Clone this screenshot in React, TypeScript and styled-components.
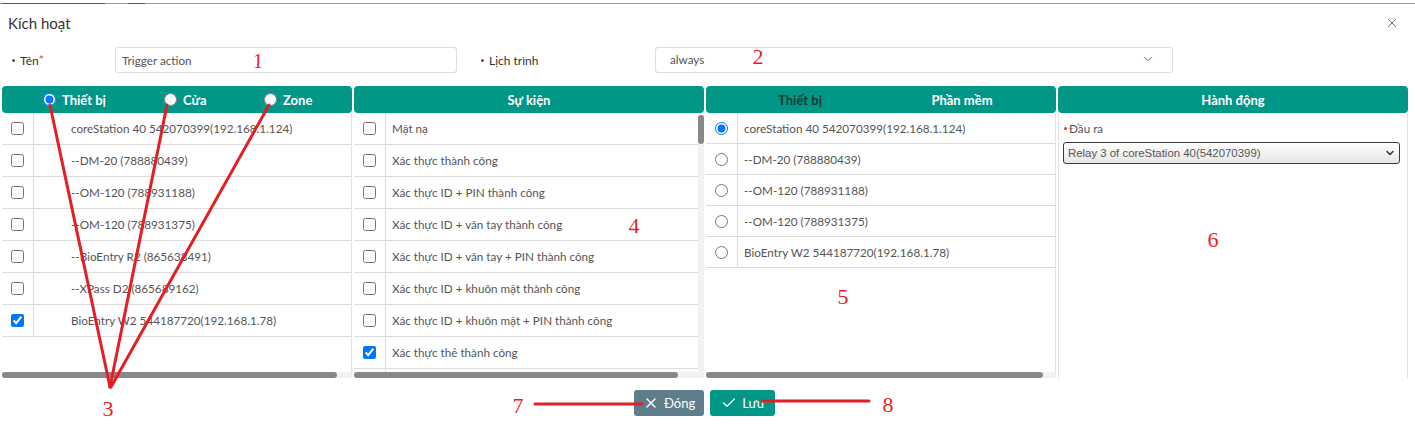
import React from "react";
import styled, { createGlobalStyle } from "styled-components";
import { X, ChevronDown, Check } from "lucide-react";

const GlobalStyle = createGlobalStyle`
  html, body { margin: 0; padding: 0; background: #fff; }
  body { font-family: Lato, "Noto Sans", sans-serif; }
  * { box-sizing: border-box; }
`;

const TEAL = "#009688";

const Page = styled.div`
  position: relative;
  width: 1415px;
  height: 442px;
  overflow: hidden;
  background: #fff;
  font-family: Lato, "Noto Sans", sans-serif;
`;

const TopStrip = styled.div`
  display: flex;
  height: 4px;
  padding-top: 3px;
`;

const StripSeg = styled.div<{ $w?: number; $c: string }>`
  height: 1px;
  background: ${(p) => p.$c};
  ${(p) => (p.$w ? `width: ${p.$w}px; flex: none;` : `flex: 1;`)}
`;

const TitleBar = styled.div`
  height: 38px;
  display: flex;
  align-items: center;
  justify-content: space-between;
  padding: 0 16px 0 8px;
`;

const Title = styled.h4`
  margin: 0;
  font-size: 15px;
  font-weight: 400;
  color: #333;
`;

const CloseBtn = styled.span`
  display: flex;
  color: #666;
`;

const FormRow = styled.div`
  display: grid;
  grid-template-columns: 103px 342px 198px 518px;
  align-items: center;
  height: 26px;
  margin: 5px 0 0 12px;
`;

const Label = styled.label<{ $indent?: number }>`
  font-size: 12px;
  color: #333;
  padding-left: ${(p) => p.$indent ?? 0}px;
  white-space: nowrap;
  display: flex;
  align-items: center;
`;

const Bullet = styled.span<{ $red?: boolean; $gap?: number }>`
  display: inline-block;
  width: 3px;
  height: 3px;
  border-radius: 50%;
  background: ${(p) => (p.$red ? "#e53935" : "#555")};
  margin-right: ${(p) => p.$gap ?? 5}px;
  flex: none;
`;

const Req = styled.span`
  color: #e53935;
  align-self: flex-start;
  margin-top: -1px;
`;

const TextBox = styled.input`
  height: 26px;
  width: 100%;
  border: 1px solid #dcdcdc;
  border-radius: 3px;
  padding: 0 6px;
  font-family: Lato, "Noto Sans", sans-serif;
  font-size: 11.7px;
  color: #555;
  outline: none;
`;

const SelectBox = styled.div`
  height: 26px;
  border: 1px solid #dcdcdc;
  border-radius: 3px;
  display: flex;
  align-items: center;
  justify-content: space-between;
  padding: 0 17px 2px 14px;
  font-size: 11.7px;
  color: #555;
`;

const Board = styled.div`
  display: grid;
  grid-template-columns: repeat(4, 350px);
  column-gap: 2px;
  margin: 13px 0 0 2px;
  height: 292px;
`;

const Panel = styled.div`
  display: flex;
  flex-direction: column;
  min-height: 0;
`;

const PanelHead = styled.div<{ $align?: string; $padLeft?: number }>`
  flex: none;
  height: 27px;
  background: ${TEAL};
  border-radius: 4px;
  color: #fff;
  font-weight: 700;
  font-size: 13px;
  display: flex;
  align-items: center;
  justify-content: ${(p) => p.$align ?? "center"};
  padding-left: ${(p) => p.$padLeft ?? 0}px;
`;

const RadioOption = styled.label<{ $w: number }>`
  display: flex;
  align-items: center;
  gap: 6px;
  width: ${(p) => p.$w}px;
  flex: none;
`;

const Tab = styled.div<{ $active?: boolean }>`
  width: 162px;
  text-align: center;
  color: ${(p) => (p.$active ? "#1f3a30" : "#fff")};
`;

const Radio = styled.input.attrs({ type: "radio" })`
  margin: 0;
  width: 13px;
  height: 13px;
`;

const CheckBox = styled.input.attrs({ type: "checkbox" })`
  margin: 0;
  width: 13px;
  height: 13px;
`;

const Body = styled.div<{ $right?: boolean }>`
  flex: 1;
  min-height: 0;
  display: flex;
  overflow: hidden;
  background: #fff;
  border-right: ${(p) => (p.$right ? "1px solid #e3e3e3" : "none")};
`;

const List = styled.div`
  flex: 1;
  min-width: 0;
  display: flex;
  flex-direction: column;
  overflow: hidden;
`;

const Row = styled.div<{ $h: number }>`
  flex: none;
  display: grid;
  grid-template-columns: 32px 1fr;
  height: ${(p) => p.$h}px;
  border-bottom: 1px solid #dcdcdc;
`;

const Lead = styled.div`
  border-right: 1px solid #dcdcdc;
  display: flex;
  align-items: center;
  justify-content: center;
`;

const Cell = styled.div<{ $pad: number }>`
  display: flex;
  align-items: center;
  padding-left: ${(p) => p.$pad}px;
  padding-bottom: 1px;
  font-size: 11.7px;
  color: #555;
  white-space: nowrap;
  overflow: hidden;
`;

const VScroll = styled.div`
  flex: none;
  width: 6px;
  background: #f1f1f1;
  padding-top: 2px;
`;

const VThumb = styled.div`
  height: 29px;
  background: #888;
  border-radius: 3px;
`;

const HScroll = styled.div`
  flex: none;
  height: 6px;
  background: #f1f1f1;
`;

const HThumb = styled.div<{ $w: number }>`
  height: 6px;
  width: ${(p) => p.$w}px;
  background: #888;
  border-radius: 3px;
`;

const ActionBody = styled.div`
  flex: 1;
  display: flex;
  flex-direction: column;
  padding: 8px 7px 0 4px;
  border-left: 1px solid #e3e3e3;
  border-right: 1px solid #e3e3e3;
`;

const FieldLabel = styled.div`
  display: flex;
  align-items: center;
  font-size: 11.7px;
  color: #555;
  padding-left: 1px;
  line-height: 14px;
`;

const NativeLikeSelect = styled.div`
  margin-top: 7px;
  height: 22px;
  border: 1px solid #3a3a3a;
  border-radius: 3px;
  background: linear-gradient(#ffffff, #e6e6e6);
  display: flex;
  align-items: center;
  justify-content: space-between;
  padding: 0 3px 0 4px;
  font-family: "Liberation Sans", Arial, sans-serif;
  font-size: 11.4px;
  color: #555;
`;

const Footer = styled.div`
  display: flex;
  justify-content: center;
  gap: 6px;
  margin-top: 12px;
  padding-right: 6px;
`;

const Button = styled.button<{ $bg: string; $px: number }>`
  height: 26px;
  display: flex;
  align-items: center;
  gap: 5px;
  padding: 0 ${(p) => p.$px}px;
  border: none;
  border-radius: 3px;
  background: ${(p) => p.$bg};
  color: #fff;
  font-family: Lato, "Noto Sans", sans-serif;
  font-size: 13px;
`;

const Overlay = styled.svg`
  position: absolute;
  left: 0;
  top: 0;
  pointer-events: none;
`;

const Mark = styled.text<{ $size?: number }>`
  font-family: "Liberation Serif", "Times New Roman", serif;
  font-size: ${(p) => p.$size ?? 22}px;
  fill: #ec1c24;
`;

const devices = [
  "coreStation 40 542070399(192.168.1.124)",
  "--DM-20 (788880439)",
  "--OM-120 (788931188)",
  "--OM-120 (788931375)",
  "--BioEntry R2 (865638491)",
  "--XPass D2 (865689162)",
  "BioEntry W2 544187720(192.168.1.78)",
];

const events = [
  "Mặt nạ",
  "Xác thực thành công",
  "Xác thực ID + PIN thành công",
  "Xác thực ID + vân tay thành công",
  "Xác thực ID + vân tay + PIN thành công",
  "Xác thực ID + khuôn mặt thành công",
  "Xác thực ID + khuôn mặt + PIN thành công",
  "Xác thực thẻ thành công",
  "",
];

const outputs = [
  "coreStation 40 542070399(192.168.1.124)",
  "--DM-20 (788880439)",
  "--OM-120 (788931188)",
  "--OM-120 (788931375)",
  "BioEntry W2 544187720(192.168.1.78)",
];

export default function App() {
  return (
    <Page>
      <GlobalStyle />
      <TopStrip>
        <StripSeg $w={2} $c="#9a9a9a" />
        <StripSeg $w={103} $c="#2e6b58" />
        <StripSeg $w={23} $c="#9a9a9a" />
        <StripSeg $w={17} $c="#2e6b58" />
        <StripSeg $c="#9a9a9a" />
      </TopStrip>
      <TitleBar>
        <Title>Kích hoạt</Title>
        <CloseBtn>
          <X size={14} strokeWidth={1.6} />
        </CloseBtn>
      </TitleBar>

      <FormRow>
        <Label>
          <Bullet />
          Tên<Req>*</Req>
        </Label>
        <TextBox readOnly defaultValue="Trigger action" />
        <Label $indent={24}>
          <Bullet />
          Lịch trình
        </Label>
        <SelectBox>
          <span>always</span>
          <ChevronDown size={14} strokeWidth={1.5} color="#555" />
        </SelectBox>
      </FormRow>

      <Board>
        <Panel>
          <PanelHead $align="flex-start" $padLeft={41}>
            <RadioOption $w={121}>
              <Radio name="src" defaultChecked />
              Thiết bị
            </RadioOption>
            <RadioOption $w={100}>
              <Radio name="src" />
              Cửa
            </RadioOption>
            <RadioOption $w={60}>
              <Radio name="src" />
              Zone
            </RadioOption>
          </PanelHead>
          <Body $right>
            <List>
              {devices.map((d, i) => (
                <Row key={i} $h={32}>
                  <Lead>
                    <CheckBox defaultChecked={i === devices.length - 1} />
                  </Lead>
                  <Cell $pad={37}>{d}</Cell>
                </Row>
              ))}
            </List>
          </Body>
          <HScroll>
            <HThumb $w={335} />
          </HScroll>
        </Panel>

        <Panel>
          <PanelHead>Sự kiện</PanelHead>
          <Body>
            <List>
              {events.map((e, i) => (
                <Row key={i} $h={32}>
                  <Lead>{e && <CheckBox defaultChecked={i === 7} />}</Lead>
                  <Cell $pad={6}>{e}</Cell>
                </Row>
              ))}
            </List>
            <VScroll>
              <VThumb />
            </VScroll>
          </Body>
          <HScroll>
            <HThumb $w={324} />
          </HScroll>
        </Panel>

        <Panel>
          <PanelHead $align="flex-start" $padLeft={13}>
            <Tab $active>Thiết bị</Tab>
            <Tab>Phần mềm</Tab>
          </PanelHead>
          <Body $right>
            <List>
              {outputs.map((o, i) => (
                <Row key={i} $h={31}>
                  <Lead>
                    <Radio name="out" defaultChecked={i === 0} />
                  </Lead>
                  <Cell $pad={6}>{o}</Cell>
                </Row>
              ))}
            </List>
          </Body>
          <HScroll>
            <HThumb $w={337} />
          </HScroll>
        </Panel>

        <Panel>
          <PanelHead>Hành động</PanelHead>
          <ActionBody>
            <FieldLabel>
              <Bullet $red $gap={2} />
              Đầu ra
            </FieldLabel>
            <NativeLikeSelect>
              <span>Relay 3 of coreStation 40(542070399)</span>
              <ChevronDown size={12} strokeWidth={3} color="#333" />
            </NativeLikeSelect>
          </ActionBody>
        </Panel>
      </Board>

      <Footer>
        <Button $bg="#607d8b" $px={9}>
          <X size={16} strokeWidth={2} />
          Đóng
        </Button>
        <Button $bg={TEAL} $px={11}>
          <Check size={16} strokeWidth={2} />
          Lưu
        </Button>
      </Footer>

      <Overlay width={1415} height={442} viewBox="0 0 1415 442">
        <g stroke="#e31e24" strokeWidth={3} strokeLinecap="round" fill="none">
          <line x1={50} y1={105} x2={110} y2={387} />
          <line x1={167} y1={105} x2={110} y2={387} />
          <line x1={269} y1={105} x2={111} y2={387} />
          <line x1={535} y1={404} x2={642} y2={404} />
          <line x1={762} y1={401} x2={869} y2={401} />
        </g>
        <Mark x={258} y={68} textAnchor="middle" $size={20}>1</Mark>
        <Mark x={758} y={64} textAnchor="middle">2</Mark>
        <Mark x={108} y={416} textAnchor="middle">3</Mark>
        <Mark x={634} y={233} textAnchor="middle">4</Mark>
        <Mark x={843} y={304} textAnchor="middle">5</Mark>
        <Mark x={1213} y={247} textAnchor="middle">6</Mark>
        <Mark x={518} y={413} textAnchor="middle">7</Mark>
        <Mark x={888} y={412} textAnchor="middle">8</Mark>
      </Overlay>
    </Page>
  );
}
